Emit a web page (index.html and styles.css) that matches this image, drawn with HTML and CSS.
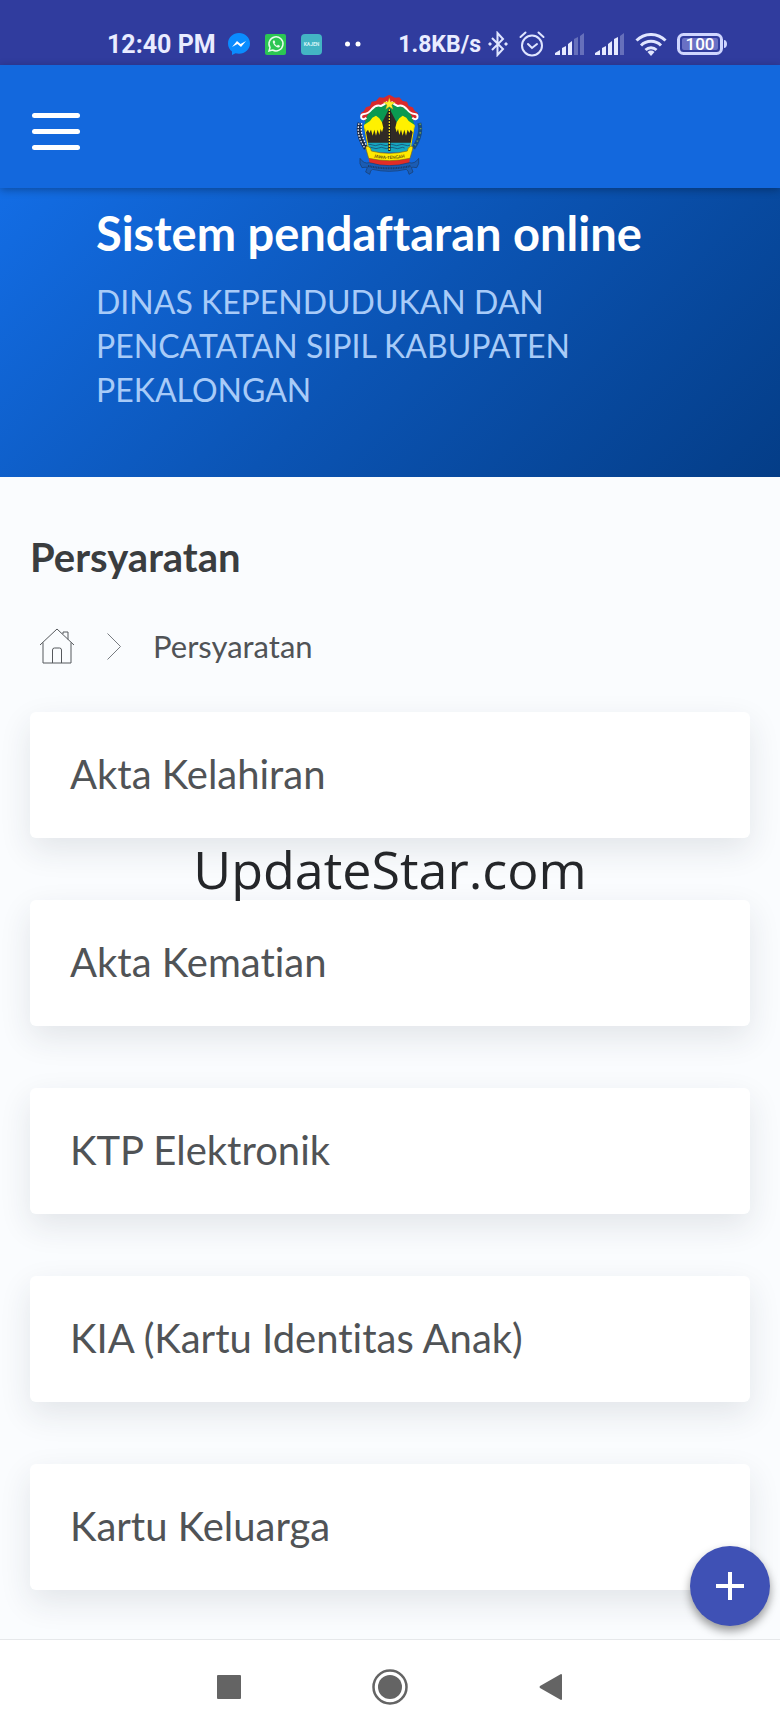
FILE: index.html
```html
<!DOCTYPE html>
<html lang="id">
<head>
  <meta charset="UTF-8">
  <meta name="viewport" content="width=device-width, initial-scale=1.0">
  <title>Persyaratan</title>
  <link rel="stylesheet" href="styles.css">
</head>
<body>
  <div class="statusbar">
    <div class="status-group status-left">
      <span class="time">12:40 PM</span>
      <svg width="22" height="22" viewBox="0 0 22 22">
        <path d="M11 0C5 0 0 4.600 0 10.500c0 3.400 1.500 6 4 8V22l3.500-1.800c1.100.3 2.300.5 3.500.5 6 0 11-4.300 11-10.200S17 0 11 0z" fill="#0a8cff"/>
        <path d="M4 14l5-6 3.500 3L18 8l-5 6-3.500-3z" fill="#fff"/>
      </svg>
      <svg width="21" height="21" viewBox="0 0 21 21">
        <rect width="21" height="21" rx="2" fill="#2bc653"/>
        <path d="M4 17l1-3.500a7 7 0 1 1 2.600 2.500z" fill="none" stroke="#e9fbee" stroke-width="1.500"/>
        <path d="M8.300 6.500c-2 1.500 2 7.200 5 7 1 0 2-1 1.500-1.800l-1.800-1-1 1c-1-.3-2-1.300-2.500-2.500l.8-1-.8-1.800z" fill="#e9fbee"/>
      </svg>
      <svg width="21" height="21" viewBox="0 0 21 21">
        <rect width="21" height="21" rx="4" fill="#43b5c4"/>
        <text x="10.500" y="12" text-anchor="middle" class="app-label">KAJEN</text>
      </svg>
      <svg class="more" width="16" height="6" viewBox="0 0 16 6">
        <circle cx="2.500" cy="3" r="2.500" fill="#fff"/>
        <circle cx="13" cy="3" r="2.500" fill="#fff"/>
      </svg>
    </div>
    <div class="status-group status-right">
      <span class="speed">1.8KB/s</span>
      <svg width="22" height="26" viewBox="0 0 22 26" fill="none" stroke="#dfe5ff" stroke-width="2">
        <path d="M5 7l11 11-5.500 6V2L16 8 5 19"/>
        <path d="M1 13l2-2 2 2-2 2zM17 13l2-2 2 2-2 2z" fill="#dfe5ff" stroke="none"/>
      </svg>
      <svg width="26" height="26" viewBox="0 0 26 26" fill="none" stroke="#dfe5ff" stroke-width="2" stroke-linecap="round">
        <circle cx="13" cy="14.500" r="10"/>
        <path d="M1.500 6l5-4.500M24.500 6l-5-4.500M9 13l4 4 5-4"/>
      </svg>
      <svg width="30" height="22" viewBox="0 0 30 22" fill="#e6eaff">
        <path d="M0 22v-2l5-3v5zM7 22v-7l4-2v9zM13 22V11l4-3v14z"/>
        <path d="M19 22V6l4-2v18zM25 22V3l4-3v22z" opacity=".3"/>
      </svg>
      <svg width="30" height="22" viewBox="0 0 30 22" fill="#e6eaff">
        <path d="M0 22v-2l5-3v5zM7 22v-7l4-2v9zM13 22V11l4-3v14zM19 22V6l4-2v18z"/>
        <path d="M25 22V3l4-3v22z" opacity=".3"/>
      </svg>
      <svg width="32" height="23" viewBox="0 0 32 23" fill="none" stroke="#e0e6ff" stroke-width="3">
        <path d="M1.500 7.500a20.500 20.500 0 0 1 29 0M6 12.500a14 14 0 0 1 20 0M10.500 17a8 8 0 0 1 11 0"/>
        <path d="M12.500 19a5 5 0 0 1 7 0L16 23z" fill="#e0e6ff" stroke="none"/>
      </svg>
      <svg width="50" height="22" viewBox="0 0 50 22">
        <rect x="1.500" y="1.500" width="43" height="19" rx="5" fill="none" stroke="#cfd6ff" stroke-width="3"/>
        <rect x="5" y="5" width="36" height="12" rx="2" fill="#6970c4"/>
        <path d="M47 7c4 0 4 8 0 8z" fill="#cfd6ff"/>
        <text x="23" y="17" text-anchor="middle" class="battery-level">100</text>
      </svg>
    </div>
  </div>

  <header class="topbar">
    <button class="menu-btn" type="button" aria-label="Menu">
      <span></span>
      <span></span>
      <span></span>
    </button>
    <svg class="emblem" viewBox="52 46 204 240" role="img" aria-label="Jawa Tengah">
      <!-- cotton and rice -->
      <path d="M64 130q-10 34 18 76" fill="none" stroke="#1b2944" stroke-width="14"/>
      <path d="M61 131q-9 33 16 72M69 130q-6 33 16 70" fill="none" stroke="#e9edf5" stroke-width="4" stroke-dasharray="5 4"/>
      <path d="M242 130q10 34-18 76" fill="none" stroke="#174b7c" stroke-width="12"/>
      <path d="M244 132q8 33-19 70" fill="none" stroke="#6f9a55" stroke-width="5" stroke-dasharray="4 9"/>
      <!-- red and white garland -->
      <path d="M66 112q-4-12 9-17l7-12 12-4 5-13 13-2 10-11 13 1 17-9 17 9 13-1 10 11 13 2 5 13 12 4 7 12q13 5 9 17l-20 14H84z" fill="#d82a2c"/>
      <!-- shield -->
      <path d="M80 124Q90 88 118 80Q136 76 152 66Q168 76 186 80Q214 88 224 124L228 140L214 216H90L76 140Z" fill="#0b9a51"/>
      <path d="M83 114q-10 9-15 1-3-11 8-12 12 0 24-15 12-14 27-9 12-5 19-13M221 114q10 9 15 1 3-11-8-12-12 0-24-15-12-14-27-9-12-5-19-13" fill="none" stroke="#fff" stroke-width="6"/>
      <!-- mountains -->
      <path d="M78 148H226L218 194H86Z" fill="#302a26"/>
      <path d="M152 86L176 132V190H128V132Z" fill="#302a26"/>
      <path d="M76 136L94 124L101 114L112 108L122 116L130 128L134 144L130 158L126 148L122 166L117 150L112 168L107 150L102 168L97 150L92 160L88 150L82 158Z" fill="#fff100"/>
      <path d="M228 136L210 124L203 114L192 108L182 116L174 128L170 144L174 158L178 148L182 166L187 150L192 168L197 150L202 168L207 150L212 160L216 150L222 158Z" fill="#fff100"/>
      <!-- sea -->
      <path d="M84 189H220L214 218H90Z" fill="#16a7c0"/>
      <path d="M86 196q8-4 16 0t16 0 16 0 16 0 16 0 16 0 16 0 18 0M88 205q8-4 16 0t16 0 16 0 16 0 16 0 16 0 14 0" fill="none" stroke="#1b3b62" stroke-width="2"/>
      <path d="M152 89v125" stroke="#171717" stroke-width="7"/>
      <path d="M152 89v125" stroke="#ffe52e" stroke-width="4" stroke-dasharray="5 4"/>
      <path d="M77 138l14 78M227 138l-14 78" stroke="#ffe100" stroke-width="3"/>
      <path d="M152 54l4 13h14l-11 9 4 13-11-8-11 8 4-13-11-9h14z" fill="#fff12c" stroke="#b98516"/>
      <!-- ribbons -->
      <path d="M90 230L92 249Q152 266 212 249L214 230Z" fill="#e12d27"/>
      <path d="M82 208Q80 198 88 200Q98 204 98 214Q152 228 206 214Q206 204 216 200Q224 198 222 208L214 236Q152 250 90 236Z" fill="#ffe900" stroke="#7f6714" stroke-width="2"/>
      <path id="motto" d="M101 232Q152 244 203 232" fill="none"/>
      <text class="emblem-text"><textPath href="#motto" startOffset="50%" text-anchor="middle">JAWA-TENGAH</textPath></text>
      <path d="M64 236q-3 18 6 28 10-2 16-1l-5 14 12 7q2-12 8-15 51 12 102 0 6 3 8 15l12-7-5-14q6-1 16 1 9-10 6-28-12 18-28 13-60 18-120 0-16 5-28-13z" fill="#1a5cb4" stroke="#1b3b68" stroke-width="2"/>
      <path d="M88 259q64 14 128 0" fill="none" stroke="#1b3b68" stroke-width="6" stroke-dasharray="3 2"/>
    </svg>
  </header>

  <section class="banner">
    <h1>Sistem pendaftaran online</h1>
    <p>DINAS KEPENDUDUKAN DAN PENCATATAN SIPIL KABUPATEN PEKALONGAN</p>
  </section>

  <main class="content">
    <h2>Persyaratan</h2>
    <nav class="breadcrumb" aria-label="Breadcrumb">
      <a href="#" aria-label="Home">
        <svg width="36" height="36" viewBox="0 0 36 36" fill="none" stroke="#55585c">
          <path d="M1 17L18 1l17 16M4 14.500V35h28V14.500M24 6V4h5v7.500M13.500 35V22q0-2 2-2h5q2 0 2 2v13"/>
        </svg>
      </a>
      <svg width="14" height="27" viewBox="0 0 14 27" fill="none" stroke="#777b80">
        <path d="M.5.500l13 13-13 13"/>
      </svg>
      <span>Persyaratan</span>
    </nav>
    <div class="cards">
      <a class="card" href="#">Akta Kelahiran</a>
      <a class="card" href="#">Akta Kematian</a>
      <a class="card" href="#">KTP Elektronik</a>
      <a class="card" href="#">KIA (Kartu Identitas Anak)</a>
      <a class="card" href="#">Kartu Keluarga</a>
      <div class="watermark">UpdateStar.com</div>
    </div>
  </main>

  <button class="fab" type="button" aria-label="Tambah">
    <svg width="28" height="28" viewBox="0 0 28 28" stroke="#fff" stroke-width="4">
      <path d="M14 0v28M0 14h28"/>
    </svg>
  </button>

  <div class="navbar">
    <button type="button" aria-label="Recent apps">
      <svg width="36" height="36" viewBox="0 0 36 36" fill="#646464">
        <rect x="6" y="6" width="24" height="24" rx="1"/>
      </svg>
    </button>
    <button type="button" aria-label="Home screen">
      <svg width="36" height="36" viewBox="0 0 36 36">
        <circle cx="18" cy="18" r="16.500" fill="none" stroke="#646464" stroke-width="2.500"/>
        <circle cx="18" cy="18" r="12" fill="#646464"/>
      </svg>
    </button>
    <button type="button" aria-label="Back">
      <svg width="36" height="36" viewBox="0 0 36 36" fill="#646464">
        <path d="M7 17l21-12q1 0 1 1v24q0 1-1 1L7 19q-1-1 0-2z"/>
      </svg>
    </button>
  </div>
</body>
</html>
```

FILE: styles.css
```css
* {
  box-sizing: border-box;
}
body {
  display: flex;
  flex-direction: column;
  min-height: 100vh;
  margin: 0;
  background: #fafcfe;
  color: #505356;
  font-family: Lato, sans-serif;
  font-variant-ligatures: none;
}
h1, h2, p {
  margin: 0;
}
a {
  color: inherit;
  text-decoration: none;
}
button {
  padding: 0;
  border: none;
  background: none;
  cursor: pointer;
}
svg {
  display: block;
  flex-shrink: 0;
}

/* status bar */
.statusbar {
  display: flex;
  justify-content: space-between;
  height: 65px;
  padding: 22px 53px 0 107px;
  background: #303c9e;
  color: #e9ecff;
  font-family: Roboto, sans-serif;
  font-weight: bold;
}
.status-group {
  display: flex;
  align-items: center;
  height: 44px;
}
.status-left {
  gap: 15px;
}
.status-right {
  gap: 10px;
}
.time {
  margin-right: -3px;
  font-size: 25px;
}
.speed {
  margin-right: -4px;
  font-size: 23px;
}
.more {
  margin-left: 8px;
}
.app-label {
  fill: #d5f3f6;
  font-size: 5px;
}
.battery-level {
  fill: #fff;
  font-size: 17px;
  font-weight: 500;
}

/* header */
.topbar {
  display: grid;
  grid-template-columns: 1fr auto 1fr;
  align-items: center;
  height: 123px;
  padding: 0 32px;
  background: #1368dd;
  box-shadow: 0 2px 8px rgba(0, 0, 0, .3);
  z-index: 1;
}
.menu-btn {
  display: flex;
  flex-direction: column;
  gap: 11px;
  width: 48px;
  margin-top: 9px;
}
.menu-btn span {
  height: 5px;
  border-radius: 3px;
  background: #fff;
}
.emblem {
  width: 68px;
  height: 80px;
  margin-top: 16px;
}
.emblem-text {
  fill: #5a4a12;
  font-size: 13px;
  font-weight: bold;
}

.banner {
  padding: 17px 96px 65px;
  background: linear-gradient(135deg, #136de5 0%, #0b54b4 50%, #043d87 100%);
  color: #fff;
}
.banner h1 {
  font-size: 47px;
  line-height: 56px;
}
.banner p {
  max-width: 500px;
  margin-top: 19px;
  color: #a8cbf8;
  font-size: 32px;
  line-height: 44px;
}

/* content */
.content {
  flex: 1;
  padding: 56px 30px 48px;
}
h2 {
  color: #3a3d3f;
  font-size: 40px;
  line-height: 48px;
}
.breadcrumb {
  display: flex;
  align-items: center;
  height: 36px;
  margin: 47px 0 48px;
  padding-left: 9px;
  font-size: 31px;
}
.breadcrumb > svg {
  margin: 0 32px;
}
.cards {
  position: relative;
  display: flex;
  flex-direction: column;
  gap: 62px;
}
.card {
  padding: 38px 40px 40px;
  border-radius: 6px;
  background: #fff;
  box-shadow: 0 12px 32px rgba(40, 50, 60, .11);
  font-size: 40px;
  line-height: 48px;
}
.watermark {
  position: absolute;
  top: 120px;
  left: 0;
  right: 0;
  color: #242629;
  font-family: "Open Sans", sans-serif;
  font-size: 52px;
  line-height: 74px;
  text-align: center;
}
.fab {
  position: fixed;
  right: 10px;
  bottom: 107px;
  display: flex;
  align-items: center;
  justify-content: center;
  width: 80px;
  height: 80px;
  border-radius: 50%;
  background: #3f51b5;
  box-shadow: 0 5px 10px rgba(0, 0, 0, .4);
}

/* system buttons */
.navbar {
  display: flex;
  align-items: center;
  justify-content: center;
  gap: 125px;
  height: 94px;
  border-top: 1px solid #e6e8ea;
  background: #fff;
}
```
